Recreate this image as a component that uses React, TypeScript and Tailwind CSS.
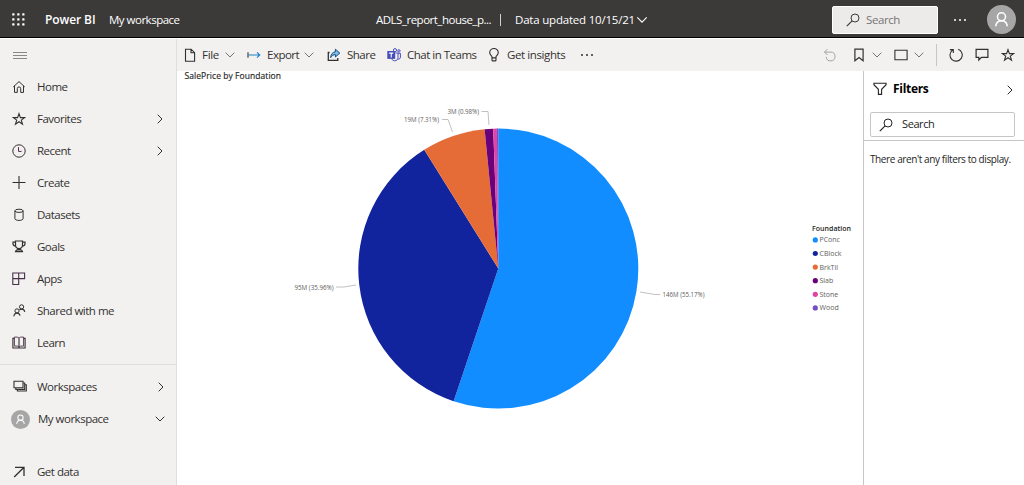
import React from 'react';

interface IconProps {
    className?: string;
    size?: number;
    children?: React.ReactNode;
}

const Icon: React.FC<IconProps> = ({ className = '', size = 14, children }) => (
    <svg
        width={size}
        height={size}
        viewBox="0 0 14 14"
        fill="none"
        stroke="currentColor"
        strokeWidth="1"
        className={`shrink-0 ${className}`}
    >
        {children}
    </svg>
);

const Chevron: React.FC<{ direction: 'right' | 'down'; className?: string }> = ({ direction, className = '' }) =>
    direction === 'right' ? (
        <svg width="6" height="10" viewBox="0 0 6 10" fill="none" stroke="currentColor" className={`shrink-0 ${className}`}>
            <path d="M.7.7 5 5 .7 9.3" />
        </svg>
    ) : (
        <svg width="10" height="6" viewBox="0 0 10 6" fill="none" stroke="currentColor" className={`shrink-0 ${className}`}>
            <path d="M.7.7 5 5 9.3.7" />
        </svg>
    );

const StarIcon: React.FC<{ className?: string }> = ({ className }) => (
    <Icon className={className}>
        <path d="M7 1.6 8.4 5.6H12.6L9.3 8.1 10.5 12.2 7 9.7 3.5 12.2 4.7 8.1 1.4 5.6H5.6Z" strokeWidth="1.1" />
    </Icon>
);

const SearchIcon: React.FC<{ className?: string }> = ({ className }) => (
    <Icon className={className}>
        <circle cx="9" cy="5" r="4" />
        <path d="M6.1 7.9.8 13.2" strokeWidth="1.2" />
    </Icon>
);

const Avatar: React.FC<{ size: number }> = ({ size }) => (
    <svg width={size} height={size} viewBox="0 0 28 28" fill="none" className="shrink-0">
        <circle cx="14" cy="14" r="14" fill="#a6a6a6" />
        <circle cx="14" cy="11.4" r="3.9" stroke="#fff" strokeWidth="1.5" />
        <path d="M8.4 20.5c.4-3.3 2.6-5.3 5.6-5.3s5.2 2 5.6 5.3" stroke="#fff" strokeWidth="1.5" />
    </svg>
);

const HomeIcon = () => (
    <Icon>
        <path d="M1.3 6.9 7 1.6 12.7 6.9M2.5 5.9V12.4H5.3V8.6a1.7 1.7 0 0 1 3.4 0V12.4H11.5V5.9" />
    </Icon>
);

const ClockIcon = () => (
    <Icon>
        <circle cx="7" cy="7" r="6.2" />
        <path d="M6.5 3.2V7.4H9.6" stroke="#5c2852" />
    </Icon>
);

const PlusIcon = () => (
    <Icon>
        <path d="M.5 6.5H13.5M7 0V13" strokeWidth="1.1" />
    </Icon>
);

const DatabaseIcon = () => (
    <Icon>
        <ellipse cx="7" cy="2.8" rx="4.1" ry="1.6" />
        <path d="M2.9 2.8V10.7C2.9 11.7 4.7 12.4 7 12.4S11.1 11.7 11.1 10.7V2.8" />
    </Icon>
);

const TrophyIcon = () => (
    <Icon>
        <path d="M3.5 1H10.5V5.1A3.5 3.5 0 0 1 3.5 5.1ZM3.5 2.1H1V3.7C1 5.1 2.2 6.1 3.7 6.1M10.5 2.1H13V3.7C13 5.1 11.8 6.1 10.3 6.1M5.7 8.3V9.8M8.3 8.3V9.8M3.5 11.7C3.8 10.4 4.6 9.9 5.7 9.9H8.3C9.4 9.9 10.2 10.4 10.5 11.7Z" strokeWidth="1.2" />
    </Icon>
);

const AppsIcon = () => (
    <Icon>
        <path d="M.8 1H12.6V6.6H.8ZM.8 6.6V12.5H6.7V1" strokeWidth="1.1" stroke="#46304a" />
    </Icon>
);

const PeopleIcon = () => (
    <Icon>
        <circle cx="9.6" cy="2.9" r="2.1" />
        <circle cx="5" cy="6.9" r="2.1" />
        <path d="M1.8 12.4C2.1 10.1 3.3 9.1 5 9.1S7.7 10 8 11.6M9.6 5.1C11.3 5.1 12.4 6.1 12.8 7.9M9.6 5.1C8.8 5.1 8.1 5.3 7.5 5.7" strokeWidth="1.1" />
    </Icon>
);

const BookIcon = () => (
    <Icon>
        <path d="M2.4 1.1H5.2C6.2 1.1 6.9 1.6 7 2.4 7.1 1.6 7.8 1.1 8.8 1.1H11.6V10.1H8.8C7.8 10.1 7.1 10.6 7 11.4 6.9 10.6 6.2 10.1 5.2 10.1H2.4Z" stroke="#5c4058" />
        <path d="M2.4 2.4H.9V12H13.1V2.4H11.6M7 2.2V11.6" strokeWidth="1.1" />
    </Icon>
);

const StackIcon = () => (
    <Icon>
        <path d="M1 1.3H10V7.8H1Z" strokeWidth="1.1" />
        <path d="M10.2 3H11.7V9.4H2.8V8.1M11.8 4.7H13.3V11H4.4V9.5" strokeWidth="1.1" />
    </Icon>
);

const FileIcon = () => (
    <Icon>
        <path d="M2.5 1.2H8.1L11.6 4.7V13.2H2.5ZM8 1.2V4.8H11.6" strokeWidth="1.1" />
    </Icon>
);

const ExportIcon = () => (
    <Icon>
        <path d="M1 4.2V9.8" strokeWidth="1.1" />
        <path d="M1.5 7H12.8M10 4.3 12.8 7 10 9.7" stroke="#1b83c9" strokeWidth="1.1" />
    </Icon>
);

const ShareIcon = () => (
    <Icon>
        <path d="M2.6 4.5H1.3V12.3H10.8V10" strokeWidth="1.3" />
        <path d="M3.6 9.7C3.8 6.2 5.8 4 8.4 3.8V1.2L12.8 5.1 8.4 9V6.6C6.5 6.6 4.9 7.7 3.6 9.7Z" fill="#78b9e8" stroke="#174f80" />
    </Icon>
);

const TeamsIcon = () => (
    <Icon className="text-[#464eb8]">
        <circle cx="8" cy="2.2" r="1.6" />
        <circle cx="11.9" cy="2.9" r="1.2" />
        <path d="M8.5 5H11V9.4C11 11.5 9.6 12.8 7.8 12.8 6.5 12.8 5.4 12.2 4.8 11M11 5.3H13.4V9C13.4 10.5 12.4 11.3 11 11.2" />
        <path d="M.3 3H8.2V10.9H.3Z" fill="currentColor" stroke="none" />
        <path d="M2.2 5.1H6.3M4.25 5.1V9.4" stroke="#fff" strokeWidth="1.1" />
    </Icon>
);

const BulbIcon = () => (
    <Icon>
        <path d="M5 9.9V8.6C4 7.5 2.7 6.4 2.7 4.6A4.3 4.1 0 0 1 11.3 4.6C11.3 6.4 10 7.5 9 8.6V9.9ZM5 9.9V11.9C5 12.5 5.4 12.9 6 12.9H8C8.6 12.9 9 12.5 9 11.9V9.9" strokeWidth="1.1" />
    </Icon>
);

const UndoIcon = () => (
    <Icon className="text-[#a5a3a1]">
        <path d="M1.5 4.1H7.6A4.4 4.4 0 1 1 3.2 8.9M4.4 1.2 1.5 4.1 4.4 7" />
    </Icon>
);

const BookmarkIcon = () => (
    <Icon>
        <path d="M2.9 1.2H11.1V12.8L7 9.6 2.9 12.8Z" strokeWidth="1.2" />
    </Icon>
);

const RefreshIcon = () => (
    <Icon>
        <path d="M9.2 1.3A6.1 6.1 0 1 1 4 1.8M.9 1.6H4.3V5" strokeWidth="1.1" />
    </Icon>
);

const CommentIcon = () => (
    <Icon className="mx-3">
        <path d="M1.1 1.4H12.9V9.4H6.5L3.8 12V9.4H1.1Z" strokeWidth="1.2" />
    </Icon>
);

const FunnelIcon = () => (
    <Icon>
        <path d="M.9 1.3H13.1V2.7L8.6 7.3V12.4H5.4V7.3L.9 2.7Z" strokeWidth="1.1" />
    </Icon>
);

interface NavItem {
    label: string;
    icon: React.ReactNode;
    expandable?: boolean;
}

const navItems: NavItem[] = [
    { label: 'Home', icon: <HomeIcon /> },
    { label: 'Favorites', icon: <StarIcon />, expandable: true },
    { label: 'Recent', icon: <ClockIcon />, expandable: true },
    { label: 'Create', icon: <PlusIcon /> },
    { label: 'Datasets', icon: <DatabaseIcon /> },
    { label: 'Goals', icon: <TrophyIcon /> },
    { label: 'Apps', icon: <AppsIcon /> },
    { label: 'Shared with me', icon: <PeopleIcon /> },
    { label: 'Learn', icon: <BookIcon /> },
];

const Dots: React.FC<{ className: string }> = ({ className }) => (
    <div className="flex gap-[3px]">
        {[0, 1, 2].map((i) => <span key={i} className={`size-[2px] rounded-full ${className}`} />)}
    </div>
);

const Header = () => (
    <header className="flex h-[38px] shrink-0 items-center border-b border-black bg-[#3b3a39] pt-0.5 text-white">
        <svg width="13" height="13" viewBox="0 0 13 13" fill="#fff" className="ml-3 shrink-0">
            {[0, 5, 10].map((y) => [0, 5, 10].map((x) => <rect key={`${x}-${y}`} x={x + 0.2} y={y + 0.2} width="2.3" height="2.3" rx="0.6" />))}
        </svg>
        <span className="ml-5 w-[64px] whitespace-nowrap text-[12px] font-semibold tracking-[-0.1px]">Power BI</span>
        <span className="w-[267px] whitespace-nowrap">My workspace</span>
        <span className="w-[124px] whitespace-nowrap">ADLS_report_house_p...</span>
        <span className="h-3 w-px bg-[#d0d0d0]" />
        <span className="ml-3.5 w-[122px] whitespace-nowrap tracking-[-0.2px]">Data updated 10/15/21</span>
        <Chevron direction="down" className="scale-110" />
        <div className="ml-auto flex h-[28px] w-[106px] items-center rounded-xs border border-white bg-[#edebe9] pl-[13px] text-[#767472]">
            <SearchIcon className="text-[#3b3a39]" />
            <span className="ml-[6px] tracking-[-0.4px]">Search</span>
        </div>
        <div className="ml-4">
            <Dots className="bg-white" />
        </div>
        <div className="ml-[21px] mr-2">
            <Avatar size={29} />
        </div>
    </header>
);

const Sidebar = () => (
    <nav className="flex w-[177px] shrink-0 flex-col border-r border-[#e1dfdd] bg-[#f2f1f0] text-[#323130]">
        <div className="flex h-8 shrink-0 items-center pl-[13px]">
            <div className="flex h-[7px] w-[14px] flex-col justify-between">
                {[0, 1, 2].map((i) => <span key={i} className="h-px bg-[#8a8886]" />)}
            </div>
        </div>
        {navItems.map(({ label, icon, expandable }) => (
            <div key={label} className="flex h-8 shrink-0 items-center pl-3">
                {icon}
                <span className="ml-[11px] whitespace-nowrap">{label}</span>
                {expandable && <Chevron direction="right" className="ml-auto mr-[13px]" />}
            </div>
        ))}
        <div className="mt-[5px] flex h-[39px] shrink-0 items-center border-t border-[#e1dfdd] pl-[13px] pt-[6px]">
            <StackIcon />
            <span className="ml-[10px]">Workspaces</span>
            <Chevron direction="right" className="ml-auto mr-3" />
        </div>
        <div className="flex h-8 shrink-0 items-center pl-[11px]">
            <Avatar size={19} />
            <span className="ml-2">My workspace</span>
            <Chevron direction="down" className="ml-auto mr-[11px]" />
        </div>
        <div className="mt-[21px] flex h-8 shrink-0 items-center pl-3">
            <Icon>
                <path d="M2.2 12 11.5 2.7M3 2.3H12V11" strokeWidth="1.3" />
            </Icon>
            <span className="ml-[11px]">Get data</span>
        </div>
    </nav>
);

const Toolbar = () => (
    <div className="flex h-8 shrink-0 items-center bg-[#f2f1f0] text-[#323130]">
        <div className="flex w-[64px] items-center pl-1.5">
            <FileIcon />
            <span className="ml-[5px] mr-1.5 tracking-[-0.3px]">File</span>
            <Chevron direction="down" className="text-[#767472]" />
        </div>
        <div className="flex w-[86px] items-center pl-1.5">
            <ExportIcon />
            <span className="ml-[6px] mr-[5px]">Export</span>
            <Chevron direction="down" className="text-[#767472]" />
        </div>
        <div className="flex w-[60px] items-center">
            <ShareIcon />
            <span className="ml-[6px]">Share</span>
        </div>
        <div className="flex w-[100px] items-center">
            <TeamsIcon />
            <span className="ml-[6px] whitespace-nowrap">Chat in Teams</span>
        </div>
        <div className="flex w-[94px] items-center">
            <BulbIcon />
            <span className="ml-[6px] whitespace-nowrap tracking-[-0.4px]">Get insights</span>
        </div>
        <Dots className="bg-[#323130]" />
        <div className="ml-auto mr-[9px] flex items-center">
            <UndoIcon />
            <div className="ml-[15px] flex items-center gap-1.5">
                <BookmarkIcon />
                <Chevron direction="down" className="text-[#767472]" />
            </div>
            <div className="ml-3 flex items-center gap-1.5">
                <Icon>
                    <path d="M.9 2.3H13.1V11.7H.9Z" strokeWidth="1.1" />
                </Icon>
                <Chevron direction="down" className="text-[#767472]" />
            </div>
            <span className="ml-3 mr-3 h-[22px] w-px bg-[#c8c6c4]" />
            <RefreshIcon />
            <CommentIcon />
            <StarIcon />
        </div>
    </div>
);

const slices = [
    { name: 'PConc', share: 55.17, color: '#118dff' },
    { name: 'CBlock', share: 35.96, color: '#12239e' },
    { name: 'BrkTil', share: 7.31, color: '#e66c37' },
    { name: 'Slab', share: 0.98, color: '#6b007b' },
    { name: 'Stone', share: 0.42, color: '#e044a7' },
    { name: 'Wood', share: 0.16, color: '#744ec2' },
];

const callouts = [
    { text: '146M (55.17%)', x: 485.5, y: 226, width: 42, line: 'M463 221 478 223.5H483' },
    { text: '95M (35.96%)', x: 117.5, y: 218.7, width: 39, line: 'M159 216H167L179 214' },
    { text: '19M (7.31%)', x: 227, y: 51, width: 35, line: 'M265 48.5H271L275.5 61' },
    { text: '3M (0.98%)', x: 270.5, y: 43, width: 31.5, line: 'M304.5 40.5H311L312 54' },
];

const CX = 321.3;
const CY = 197.6;
const RADIUS = 140;

const pointAt = (share: number) => {
    const angle = (share / 100) * Math.PI * 2;
    return `${(CX + RADIUS * Math.sin(angle)).toFixed(2)} ${(CY - RADIUS * Math.cos(angle)).toFixed(2)}`;
};

const PieChart = () => {
    let start = 0;
    return (
        <svg width="686" height="414" viewBox="0 0 686 414" className="block tracking-normal">
            <text x="7.5" y="8" fontSize="8.5" textLength="96.5" fill="#252423" stroke="#252423" strokeWidth="0.15">
                SalePrice by Foundation
            </text>
            {slices.map(({ name, share, color }) => {
                const from = start;
                start += share;
                return (
                    <path
                        key={name}
                        d={`M${CX} ${CY}L${pointAt(from)}A${RADIUS} ${RADIUS} 0 ${share > 50 ? 1 : 0} 1 ${pointAt(start)}Z`}
                        fill={color}
                    />
                );
            })}
            {callouts.map(({ text, x, y, width, line }) => (
                <g key={text}>
                    <path d={line} fill="none" stroke="#b3b0ad" strokeWidth="0.8" />
                    <text x={x} y={y} fontSize="6.8" textLength={width} lengthAdjust="spacingAndGlyphs" fill="#605e5c">{text}</text>
                </g>
            ))}
            <text x="635" y="160" fontSize="7" fontWeight="600" textLength="39" fill="#252423">Foundation</text>
            {slices.map(({ name, color }, i) => (
                <g key={name}>
                    <circle cx="638.3" cy={168.9 + i * 13.6} r="2.6" fill={color} />
                    <text x="642.5" y={171.4 + i * 13.6} fontSize="7" fill="#605e5c">{name}</text>
                </g>
            ))}
        </svg>
    );
};

const FiltersPane = () => (
    <aside className="flex flex-1 flex-col border-l border-[#c8c6c4] text-[#252423]">
        <div className="flex h-[36px] items-center pl-[9px] pr-[9px]">
            <FunnelIcon />
            <span className="ml-[6px] text-[12px] font-bold tracking-[-0.3px] text-black">Filters</span>
            <Chevron direction="right" className="ml-auto mr-0.5 mt-0.5" />
        </div>
        <div className="border-b border-[#c8c6c4] pb-[3px] pl-1.5 pt-[5px]">
            <div className="flex h-[25px] w-[145px] items-center rounded-xs border border-[#c8c6c4] pl-2">
                <SearchIcon />
                <span className="ml-[9px] text-[11px] tracking-[-0.4px]">Search</span>
            </div>
        </div>
        <p className="mt-[10px] whitespace-nowrap pl-1.5 text-[10px] leading-4 tracking-[-0.4px]">There aren't any filters to display.</p>
    </aside>
);

export default function App() {
    return (
        <div className="flex h-[485px] w-[1024px] flex-col overflow-hidden bg-white font-['Open_Sans','Noto_Sans',sans-serif] text-[11.5px] tracking-[-0.5px]">
            <Header />
            <div className="flex min-h-0 flex-1 border-t border-white">
                <Sidebar />
                <div className="flex min-w-0 flex-1 flex-col">
                    <Toolbar />
                    <div className="flex min-h-0 flex-1">
                        <main className="w-[686px] shrink-0">
                            <PieChart />
                        </main>
                        <FiltersPane />
                    </div>
                </div>
            </div>
        </div>
    );
}
